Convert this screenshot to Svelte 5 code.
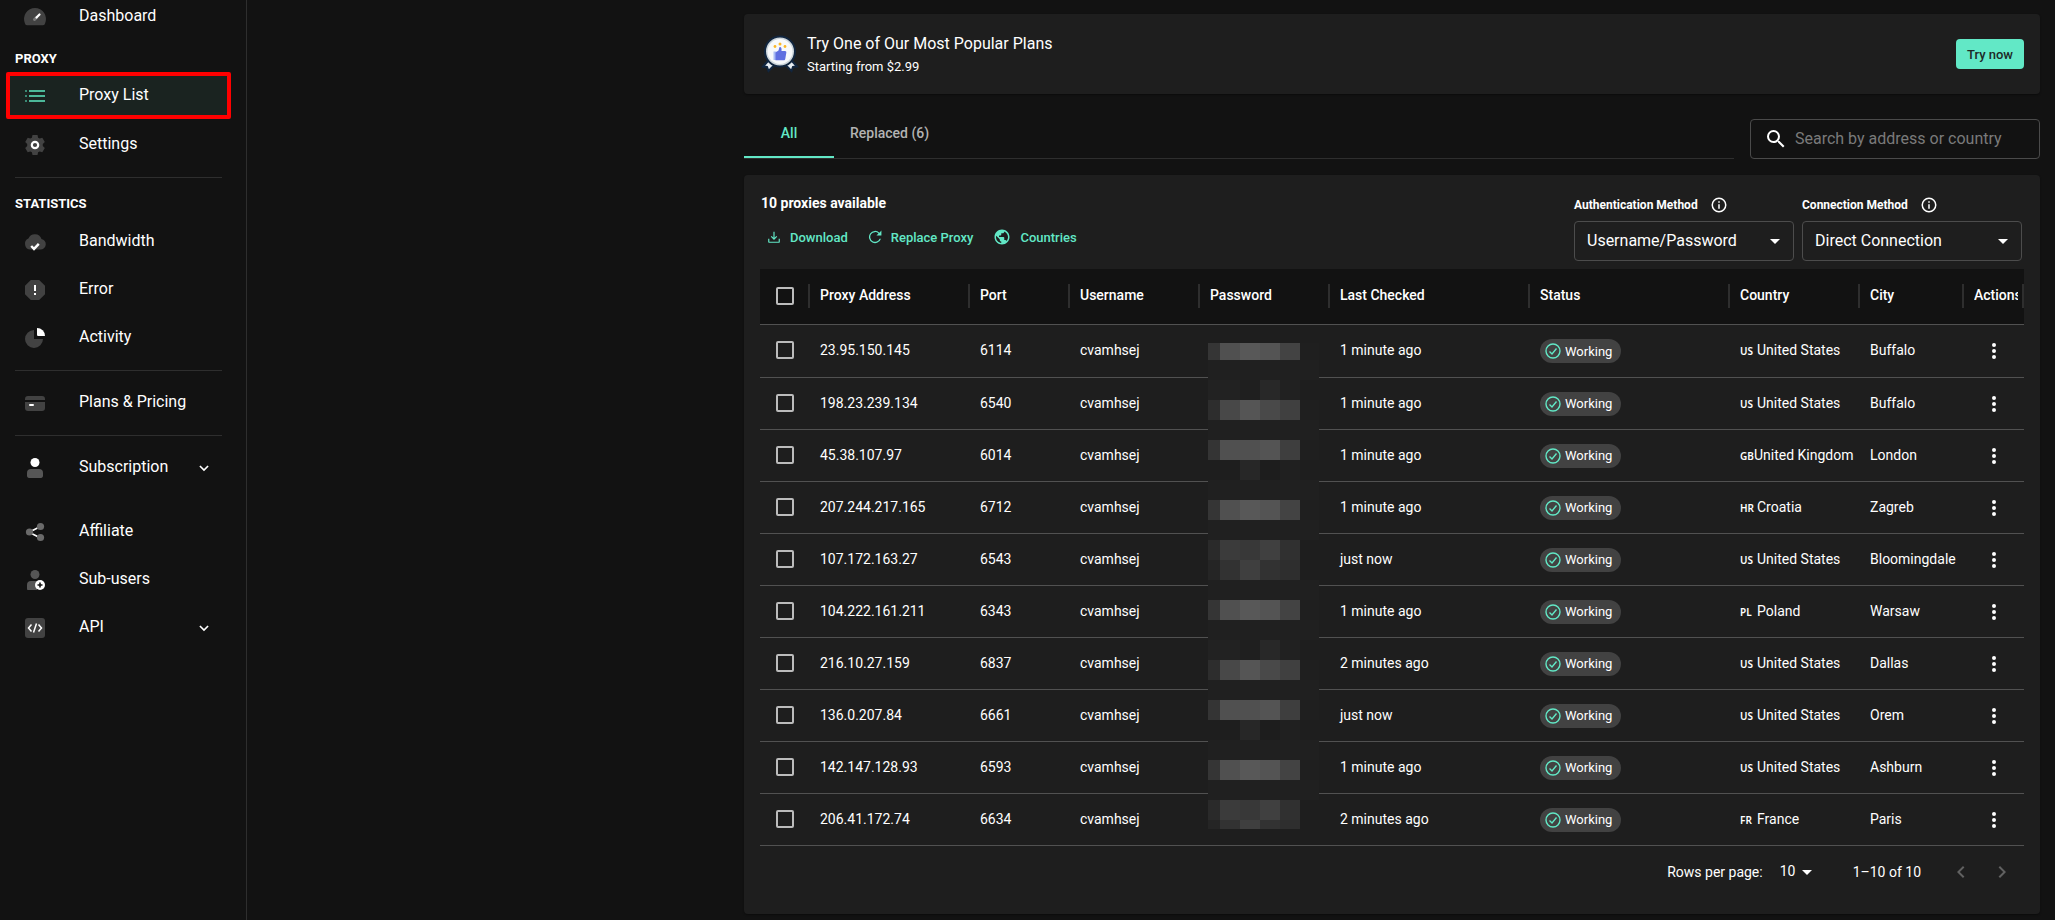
<script>
  let search = $state('')
  let auth = $state('Username/Password')
  let connection = $state('Direct Connection')
  let perPage = $state('10')
  let tab = $state('all')
  let selected = $state([])

  const nav = [
    { icon: 'dashboard', label: 'Dashboard' },
    { heading: 'PROXY' },
    { icon: 'list', label: 'Proxy List', active: true },
    { icon: 'settings', label: 'Settings' },
    { divider: true },
    { heading: 'STATISTICS' },
    { icon: 'cloud', label: 'Bandwidth' },
    { icon: 'error', label: 'Error' },
    { icon: 'pie', label: 'Activity' },
    { divider: true },
    { icon: 'card', label: 'Plans & Pricing' },
    { divider: true },
    { icon: 'user', label: 'Subscription', expand: true, last: true },
    { icon: 'share', label: 'Affiliate' },
    { icon: 'subuser', label: 'Sub-users' },
    { icon: 'code', label: 'API', expand: true },
  ]

  const proxies = [
    { ip: '23.95.150.145', port: 6114, checked: '1 minute ago', cc: 'US', country: 'United States', city: 'Buffalo' },
    { ip: '198.23.239.134', port: 6540, checked: '1 minute ago', cc: 'US', country: 'United States', city: 'Buffalo' },
    { ip: '45.38.107.97', port: 6014, checked: '1 minute ago', cc: 'GB', country: 'United Kingdom', city: 'London' },
    { ip: '207.244.217.165', port: 6712, checked: '1 minute ago', cc: 'HR', country: 'Croatia', city: 'Zagreb' },
    { ip: '107.172.163.27', port: 6543, checked: 'just now', cc: 'US', country: 'United States', city: 'Bloomingdale' },
    { ip: '104.222.161.211', port: 6343, checked: '1 minute ago', cc: 'PL', country: 'Poland', city: 'Warsaw' },
    { ip: '216.10.27.159', port: 6837, checked: '2 minutes ago', cc: 'US', country: 'United States', city: 'Dallas' },
    { ip: '136.0.207.84', port: 6661, checked: 'just now', cc: 'US', country: 'United States', city: 'Orem' },
    { ip: '142.147.128.93', port: 6593, checked: '1 minute ago', cc: 'US', country: 'United States', city: 'Ashburn' },
    { ip: '206.41.172.74', port: 6634, checked: '2 minutes ago', cc: 'FR', country: 'France', city: 'Paris' },
  ]

  const columns = ['Proxy Address', 'Port', 'Username', 'Password', 'Last Checked', 'Status', 'Country', 'City', 'Actions']

  // pixelated mask over the password column: [top, height, shades]
  const blank = ['#202020', '#202020', '#202020', '#202020', '#202020', '#202020']
  const bright = ['#353535', '#505050', '#585858', '#545454', '#434343', '#1f1f1f']
  const bright2 = ['#2d2d2d', '#484848', '#555555', '#494949', '#404040', '#1f1f1f']
  const bright3 = ['#343434', '#505050', '#505050', '#545454', '#3e3e3e', '#1f1f1f']
  const faint = ['#222222', '#222222', '#1f1f1f', '#282828', '#212121', '#1e1e1e']
  const faint2 = ['#1e1e1e', '#1e1e1e', '#272727', '#1d1d1d', '#202020', '#1e1e1e']
  const mid = ['#2a2a2a', '#3b3b3b', '#383838', '#404040', '#303030', '#1e1e1e']
  const mid2 = ['#252525', '#323232', '#3f3f3f', '#323232', '#2e2e2e', '#1e1e1e']
  const mask = [
    [0, 17, bright], [17, 20, blank], [37, 20, faint], [57, 20, bright2], [77, 20, blank],
    [97, 20, bright3], [117, 20, faint2], [137, 20, blank], [157, 20, bright], [177, 20, blank],
    [197, 20, mid], [217, 20, mid2], [237, 20, blank], [257, 20, bright], [277, 20, blank],
    [297, 20, faint], [317, 20, bright2], [337, 20, blank], [357, 20, bright3], [377, 20, faint2],
    [397, 20, blank], [417, 20, bright], [437, 20, blank], [457, 20, mid], [477, 9, mid2],
  ]

  const allChecked = $derived(selected.length === proxies.length)

  function toggleAll() {
    selected = allChecked ? [] : proxies.map(p => p.ip)
  }
</script>

{#snippet navIcon(name)}
  <svg class="nav-icon" viewBox="0 0 24 24" aria-hidden="true">
    {#if name === 'dashboard'}
      <path fill="#424242" d="M12 3a11 11 0 0 0-10.2 15c.5 1.600 1 2.200 2.200 2.200h16c1.200 0 1.700-.6 2.200-2.200A11 11 0 0 0 12 3z" />
      <path stroke="#777" stroke-width="3" stroke-linecap="round" d="m11.500 14.500 2-2" />
      <path stroke="#fff" stroke-width="2.200" stroke-linecap="round" d="m13.500 12.500 3-3" />
    {:else if name === 'list'}
      <path fill="#4cb899" d="M6 6h16v2H6zm0 5h16v2H6zm0 5h16v2H6z" />
      <path fill="#3a8a75" d="M2 6h2v2H2zm0 5h2v2H2zm0 5h2v2H2z" />
    {:else if name === 'settings'}
      <path fill="#424242" d="M9.500 2h5l.6 2.700 1.600.9 2.600-.8 2.500 4.300-2 1.900v2l2 1.900-2.500 4.300-2.600-.8-1.600.9-.6 2.700h-5l-.6-2.700-1.600-.9-2.600.8-2.500-4.300 2-1.900v-2l-2-1.900 2.500-4.300 2.600.8 1.600-.9z" />
      <circle cx="12" cy="12" r="3.200" fill="none" stroke="#fff" stroke-width="2.200" />
    {:else if name === 'cloud'}
      <path fill="#424242" d="M18.500 9A7 7 0 0 0 5.400 8.600 5.700 5.700 0 0 0 7.500 19.500h9.800A5.300 5.300 0 0 0 18.500 9z" />
      <path fill="none" stroke="#fff" stroke-width="2.400" d="m8.200 16 2.800 2.900 4.800-5" />
    {:else if name === 'error'}
      <path fill="#424242" d="M7.800 2h8.400L22 7.800v8.400L16.200 22H7.800L2 16.200V7.800z" />
      <path fill="#fff" d="M11 7h2v6h-2zm0 8h2v2h-2z" />
    {:else if name === 'pie'}
      <path fill="#424242" d="M11 4v9h9a9 9 0 1 1-9-9z" />
      <path fill="#fff" d="M14 2a8 8 0 0 1 8 8h-6.500c-1 0-1.500-.5-1.500-1.500z" />
    {:else if name === 'card'}
      <path fill="#424242" d="M5 5h14a3 3 0 0 1 3 3v1H2V8a3 3 0 0 1 3-3zM2 11h20v6a3 3 0 0 1-3 3H5a3 3 0 0 1-3-3z" />
      <path fill="#fff" d="M7 13h3a1 1 0 0 1 0 2H7a1 1 0 0 1 0-2z" />
    {:else if name === 'user'}
      <circle cx="12" cy="6.500" r="4.500" fill="#fff" />
      <path fill="#565656" d="M8 13h8a4 4 0 0 1 4 4v2.500c0 1.500-.8 2.500-2 2.500H6c-1.200 0-2-1-2-2.500V17a4 4 0 0 1 4-4z" />
    {:else if name === 'share'}
      <path stroke="#fff" stroke-width="1.600" d="m8.500 11 6-3M8.500 13.500l6 3" />
      <g fill="#6a6a6a">
        <circle cx="6.500" cy="12" r="3.600" />
        <circle cx="17.500" cy="6.500" r="3.600" />
        <circle cx="17.500" cy="17.500" r="3.600" />
      </g>
    {:else if name === 'subuser'}
      <circle cx="12" cy="6.500" r="4.500" fill="#565656" />
      <path fill="#565656" d="M8 13h6v9H5c-.6 0-1-.5-1-1.500V17a4 4 0 0 1 4-4z" />
      <circle cx="17" cy="17" r="5" fill="#fff" />
      <path fill="#121212" d="M16.200 14.500h1.600v1.700h1.700v1.600h-1.700v1.700h-1.600v-1.700h-1.700v-1.600h1.700z" />
    {:else if name === 'code'}
      <rect x="2" y="2" width="20" height="20" rx="3" fill="#424242" />
      <path fill="none" stroke="#fff" stroke-width="1.500" d="M8.500 8.500 5.500 12l3 3.500M15.500 8.500l3 3.500-3 3.500M13.500 7.500l-3 9" />
    {/if}
  </svg>
{/snippet}

{#snippet info()}
  <svg class="icon info" viewBox="0 0 24 24" aria-hidden="true">
    <path d="M11 7h2v2h-2zm0 4h2v6h-2zm1-9a10 10 0 1 0 0 20 10 10 0 0 0 0-20zm0 18a8 8 0 1 1 0-16 8 8 0 0 1 0 16z" />
  </svg>
{/snippet}

<div class="app">
  <aside class="sidebar">
    <nav>
      {#each nav as item}
        {#if item.divider}
          <hr />
        {:else if item.heading}
          <h2>{item.heading}</h2>
        {:else}
          <a href="#{item.icon}" class="nav-item" class:active={item.active} class:last={item.last}>
            {@render navIcon(item.icon)}
            <span>{item.label}</span>
            {#if item.expand}
              <svg class="expand" viewBox="0 0 24 24" aria-hidden="true">
                <path fill="none" stroke="#fff" stroke-width="2.800" d="m5 8.500 7 7 7-7" />
              </svg>
            {/if}
          </a>
        {/if}
      {/each}
    </nav>
  </aside>

  <main>
    <div class="container">
      <section class="card banner">
        <svg class="badge" viewBox="0 0 36 38" aria-hidden="true">
          <path fill="#e8edf2" stroke="#12263f" stroke-width="2" d="m6.500 25.500-5.500 6 4 .5 1.500 4 6-6zM29.500 25.500l5.500 6-4 .5-1.500 4-6-6z" />
          <circle cx="18" cy="16.500" r="15" fill="#cdd6dc" stroke="#12263f" stroke-width="2" />
          <circle cx="18" cy="16.500" r="12.500" fill="#f7f9fb" />
          <path fill="#a9bcf5" d="M11.500 16.500h3V25h-3z" />
          <path fill="#5f6fe0" d="M13.500 17.500l3-2 1-3.500c1.500-.5 2.400.8 2 4H23c1 0 1.500.8 1.300 1.800l-1 6c-.2 1-.8 1.500-1.600 1.500h-8.200z" />
          <g fill="#fbb829">
            <circle cx="18" cy="9" r="1.500" />
            <circle cx="13" cy="11.500" r="1.400" />
            <circle cx="23" cy="11.500" r="1.400" />
          </g>
        </svg>
        <div class="banner-text">
          <p class="banner-title">Try One of Our Most Popular Plans</p>
          <p class="banner-sub">Starting from $2.99</p>
        </div>
        <button class="try">Try now</button>
      </section>

      <div class="filters">
        <div class="tabs" role="tablist">
          <button role="tab" class="tab" class:on={tab === 'all'} aria-selected={tab === 'all'} onclick={() => (tab = 'all')}>All</button>
          <button role="tab" class="tab" class:on={tab === 'replaced'} aria-selected={tab === 'replaced'} onclick={() => (tab = 'replaced')}>Replaced (6)</button>
        </div>
        <label class="search">
          <svg class="icon" viewBox="0 0 24 24" aria-hidden="true">
            <path d="M15.500 14h-.79l-.28-.27A6.471 6.471 0 0 0 16 9.500 6.500 6.500 0 1 0 9.500 16c1.610 0 3.090-.59 4.230-1.570l.27.28v.79l5 4.990L20.490 19l-4.990-5zm-6 0C7.010 14 5 11.990 5 9.500S7.010 5 9.500 5 14 7.010 14 9.500 11.990 14 9.500 14z" />
          </svg>
          <input type="text" aria-label="Search" placeholder="Search by address or country" bind:value={search} />
        </label>
      </div>

      <section class="card list">
        <div class="list-head">
          <div class="summary">
            <h1>10 proxies available</h1>
            <div class="tools">
              <button class="tool">
                <svg viewBox="0 0 24 24" aria-hidden="true">
                  <path d="M17.500 11.500l-1.500-1.400-3 3V3h-2v10.100l-3-3-1.500 1.400L12 17zM20 15v5H4v-5H2v5c0 1.100.9 2 2 2h16a2 2 0 0 0 2-2v-5z" />
                </svg>
                Download
              </button>
              <button class="tool">
                <svg viewBox="0 0 24 24" aria-hidden="true">
                  <path d="M19.500 4.500A10.500 10.500 0 1 0 22.200 15h-2.300a8.300 8.300 0 1 1-1.900-9L14.500 9.500H23V1z" />
                </svg>
                Replace Proxy
              </button>
              <button class="tool">
                <svg class="globe" viewBox="0 0 24 24" aria-hidden="true">
                  <path d="M12 2C6.480 2 2 6.480 2 12s4.480 10 10 10 10-4.480 10-10S17.520 2 12 2zm-1 17.930c-3.950-.49-7-3.850-7-7.930 0-.62.080-1.210.21-1.790L9 15v1c0 1.100.9 2 2 2v1.930zm6.900-2.540c-.26-.81-1-1.390-1.900-1.390h-1v-3c0-.55-.45-1-1-1H8v-2h2c.55 0 1-.45 1-1V7h2c1.100 0 2-.9 2-2v-.41c2.930 1.190 5 4.060 5 7.410 0 2.080-.8 3.970-2.100 5.390z" />
                </svg>
                Countries
              </button>
            </div>
          </div>
          <div class="method">
            <label for="auth">Authentication Method {@render info()}</label>
            <div class="select">
              <select id="auth" bind:value={auth}>
                <option>Username/Password</option>
                <option>IP Authentication</option>
              </select>
              <svg class="icon arrow" viewBox="0 0 24 24" aria-hidden="true"><path d="m7 10 5 5 5-5z" /></svg>
            </div>
          </div>
          <div class="method">
            <label for="connection">Connection Method {@render info()}</label>
            <div class="select">
              <select id="connection" bind:value={connection}>
                <option>Direct Connection</option>
                <option>Rotating Endpoint</option>
              </select>
              <svg class="icon arrow" viewBox="0 0 24 24" aria-hidden="true"><path d="m7 10 5 5 5-5z" /></svg>
            </div>
          </div>
        </div>

        <div class="grid">
          <table>
            <colgroup>
              <col style="width:50px" />
              <col style="width:160px" />
              <col style="width:100px" />
              <col style="width:130px" />
              <col style="width:130px" />
              <col style="width:200px" />
              <col style="width:200px" />
              <col style="width:130px" />
              <col />
              <col style="width:60px" />
            </colgroup>
            <thead>
              <tr>
                <th class="check"><div><input type="checkbox" aria-label="Select all" checked={allChecked} onchange={toggleAll} /></div></th>
                {#each columns as c}
                  <th scope="col"><div><span>{c}</span></div></th>
                {/each}
              </tr>
            </thead>
            <tbody>
              {#each proxies as p (p.ip)}
                <tr>
                  <td class="check"><input type="checkbox" aria-label={p.ip} value={p.ip} bind:group={selected} /></td>
                  <td>{p.ip}</td>
                  <td>{p.port}</td>
                  <td>cvamhsej</td>
                  <td></td>
                  <td>{p.checked}</td>
                  <td class="status">
                    <span class="chip">
                      <svg viewBox="0 0 16 16" aria-hidden="true">
                        <circle cx="8" cy="8" r="7" />
                        <path d="m4.500 8.500 2.500 2.500 4.500-5.500" />
                      </svg>
                      Working
                    </span>
                  </td>
                  <td><div class="country"><span class="cc">{p.cc}</span><span>{p.country}</span></div></td>
                  <td>{p.city}</td>
                  <td class="actions">
                    <button aria-label="Actions for {p.ip}">
                      <svg class="icon" viewBox="0 0 24 24" aria-hidden="true">
                        <path d="M12 8a2 2 0 1 0 0-4 2 2 0 0 0 0 4zm0 2a2 2 0 1 0 0 4 2 2 0 0 0 0-4zm0 6a2 2 0 1 0 0 4 2 2 0 0 0 0-4z" />
                      </svg>
                    </button>
                  </td>
                </tr>
              {/each}
            </tbody>
          </table>

          <svg class="mask" viewBox="0 0 111 486" shape-rendering="crispEdges" aria-hidden="true">
            {#each mask as [top, height, shades]}
              {#each shades as fill, i}
                <rect x={i ? i * 20 - 8 : 0} y={top} width={i ? (i === 5 ? 19 : 20) : 12} {height} {fill} />
              {/each}
            {/each}
          </svg>
        </div>

        <div class="pager">
          <label for="per-page">Rows per page:</label>
          <div class="per-page">
            <select id="per-page" bind:value={perPage}>
              <option>10</option>
              <option>25</option>
              <option>50</option>
            </select>
            <svg class="icon arrow" viewBox="0 0 24 24" aria-hidden="true"><path d="m7 10 5 5 5-5z" /></svg>
          </div>
          <span class="range">1–10 of 10</span>
          <button disabled aria-label="Previous page">
            <svg class="icon" viewBox="0 0 24 24" aria-hidden="true"><path d="M15.410 7.410 14 6l-6 6 6 6 1.410-1.410L10.830 12z" /></svg>
          </button>
          <button disabled aria-label="Next page">
            <svg class="icon" viewBox="0 0 24 24" aria-hidden="true"><path d="M10 6 8.590 7.410 13.170 12l-4.580 4.590L10 18l6-6z" /></svg>
          </button>
        </div>
      </section>
    </div>
  </main>
</div>

<style>
  :global(body) { background: #121212; }
  .app {
    --card: #1e1e1e;
    --accent: #62e8c6;
    display: flex;
    min-height: 100vh;
    font-family: Roboto, "Liberation Sans", sans-serif;
    font-size: 14px;
    color: #fff;
    overflow: hidden;
  }
  button, input, select { font: inherit; color: inherit; }
  button { background: none; border: 0; padding: 0; cursor: pointer; }
  h1, h2, p { margin: 0; }
  .icon { width: 24px; height: 24px; fill: currentColor; flex-shrink: 0; }

  /* sidebar */
  .sidebar {
    width: 246px;
    flex-shrink: 0;
    border-right: 1px solid #2e2e2e;
  }
  nav {
    display: flex;
    flex-direction: column;
    margin-top: -7px;
  }
  .nav-item {
    display: flex;
    align-items: center;
    box-sizing: border-box;
    height: 48px;
    margin: 0 15px 0 6px;
    padding: 0 17px 0 17px;
    color: #fff;
    font-size: 16px;
    text-decoration: none;
  }
  .nav-item span { flex: 1; padding-bottom: 3px; }
  .nav-item.active {
    height: 47px;
    margin-top: -1px;
    margin-bottom: 2px;
    padding: 0 13px;
    background: #1a2320;
    border: 4px solid #f00;
    border-radius: 2px;
  }
  .nav-item.last { margin-bottom: 16px; }
  .nav-icon {
    width: 24px;
    height: 24px;
    margin-right: 32px;
    fill: none;
  }
  .expand { width: 14px; height: 14px; margin-right: 3px; }
  h2 {
    padding: 4px 15px 0;
    font-size: 13px;
    line-height: 28px;
    font-weight: 700;
  }
  hr {
    width: 207px;
    margin: 8px 0 8px 15px;
    border: 0;
    border-top: 1px solid #2e2e2e;
  }

  main { flex: 1; min-width: 0; padding: 14px 15px 6px 16px; }
  .container {
    display: flex;
    flex-direction: column;
    gap: 16px;
    max-width: 1296px;
    margin-left: auto;
  }
  .card {
    background: var(--card);
    border-radius: 4px;
    box-shadow: 0 1px 2px rgba(0, 0, 0, 0.4);
  }

  .banner {
    display: flex;
    align-items: center;
    gap: 8px;
    padding: 16px 16px 16px 17px;
    min-height: 48px;
  }
  .badge { width: 38px; height: 38px; }
  .banner-text { flex: 1; padding-top: 2px; }
  .banner-title { font-size: 16px; line-height: 24px; }
  .banner-sub { font-size: 13px; line-height: 22px; }
  .try {
    height: 30px;
    padding: 0 11px;
    border-radius: 4px;
    background: var(--accent);
    color: #1d2a27;
    font-size: 13px;
    font-weight: 500;
  }

  .filters { display: flex; align-items: flex-end; gap: 16px; }
  .tabs { display: flex; flex: 1; border-bottom: 1px solid #2e2e2e; }
  .tab {
    box-sizing: border-box;
    min-width: 90px;
    height: 48px;
    padding: 0 16px;
    border-bottom: 2px solid transparent;
    color: #b3b3b3;
    font-weight: 500;
  }
  .tab.on { color: var(--accent); border-bottom-color: var(--accent); }
  .search {
    display: flex;
    align-items: center;
    gap: 7px;
    box-sizing: border-box;
    width: 290px;
    height: 40px;
    padding: 0 13px;
    border: 1px solid #4a4a4a;
    border-radius: 4px;
  }
  .search input {
    flex: 1;
    min-width: 0;
    padding: 0 0 2px;
    border: 0;
    outline: 0;
    background: none;
    font-size: 16px;
  }
  .search input::placeholder { color: #7a7a7a; opacity: 1; }

  .list { padding: 16px; }
  .list-head { display: flex; gap: 8px; padding-right: 2px; height: 78px; }
  .summary { flex: 1; }
  h1 { padding-left: 1px; font-size: 14px; line-height: 24px; font-weight: 700; }
  .tools { display: flex; gap: 20px; padding: 6px 0 0 7px; }
  .tool {
    display: flex;
    align-items: center;
    gap: 9px;
    height: 32px;
    color: var(--accent);
    font-size: 13px;
    font-weight: 500;
  }
  .tool svg { width: 14px; height: 14px; fill: currentColor; }
  .tool .globe { width: 18px; height: 18px; }
  .method { width: 220px; }
  .method label {
    display: flex;
    align-items: center;
    gap: 12px;
    height: 28px;
    font-size: 12px;
    font-weight: 700;
  }
  .info { width: 18px; height: 18px; }
  .select { position: relative; margin-top: 2px; }
  .select select {
    appearance: none;
    width: 100%;
    height: 40px;
    padding: 0 32px 2px 12px;
    border: 1px solid #4c4c4c;
    border-radius: 4px;
    background: none;
    font-size: 16px;
  }
  .arrow { position: absolute; right: 7px; top: 8px; pointer-events: none; }

  /* proxies table */
  .grid { position: relative; }
  table {
    width: 100%;
    table-layout: fixed;
    border-collapse: separate;
    border-spacing: 0;
  }
  th, td {
    box-sizing: border-box;
    padding: 0 10px 2px;
    text-align: left;
    border-bottom: 1px solid #515151;
    white-space: nowrap;
  }
  th {
    height: 56px;
    padding-right: 0;
    background: #121212;
    font-weight: 500;
  }
  th div {
    height: 24px;
    line-height: 22px;
    padding-right: 4px;
    border-right: 2px solid #2e2e2e;
  }
  th span { display: block; overflow: hidden; }
  td { height: 52px; }
  tbody tr:first-child td { height: 53px; }
  .check { padding-left: 16px; }
  td.check { padding-right: 0; }
  .check div { display: flex; align-items: center; }
  .check input {
    appearance: none;
    display: block;
    box-sizing: border-box;
    width: 18px;
    height: 18px;
    margin: 0;
    border: 2px solid #bcbcbc;
    border-radius: 2px;
  }
  .check input:checked { background: var(--accent); border-color: var(--accent); }
  .status { padding-bottom: 0; }
  .chip {
    display: inline-flex;
    align-items: center;
    gap: 4px;
    height: 24px;
    padding: 0 9px 0 5px;
    border-radius: 12px;
    background: #424242;
    font-size: 13px;
    vertical-align: middle;
  }
  .chip svg {
    width: 16px;
    height: 16px;
    fill: none;
    stroke: var(--accent);
    stroke-width: 1.400;
  }
  .country { display: flex; align-items: baseline; }
  .cc {
    width: 17px;
    min-width: 14px;
    font-family: "Noto Sans", sans-serif;
    font-size: 10px;
    line-height: 14px;
    font-weight: 600;
  }
  .actions { padding: 0 18px; }
  .actions button { display: block; }
  .actions svg { display: block; }
  .mask {
    position: absolute;
    left: 448px;
    top: 74px;
    width: 111px;
    height: 486px;
  }

  .pager {
    display: flex;
    align-items: center;
    justify-content: flex-end;
    height: 52px;
  }
  .per-page { position: relative; margin: 0 33px 0 9px; }
  .per-page select {
    appearance: none;
    width: 48px;
    height: 24px;
    padding: 0 0 2px 8px;
    border: 0;
    background: none;
  }
  .per-page .arrow { right: 1px; top: 0; }
  .range { margin-right: 28px; }
  .pager button { height: 24px; margin-right: 17px; color: #616161; }
  .pager button:last-child { margin-right: 10px; }
</style>
